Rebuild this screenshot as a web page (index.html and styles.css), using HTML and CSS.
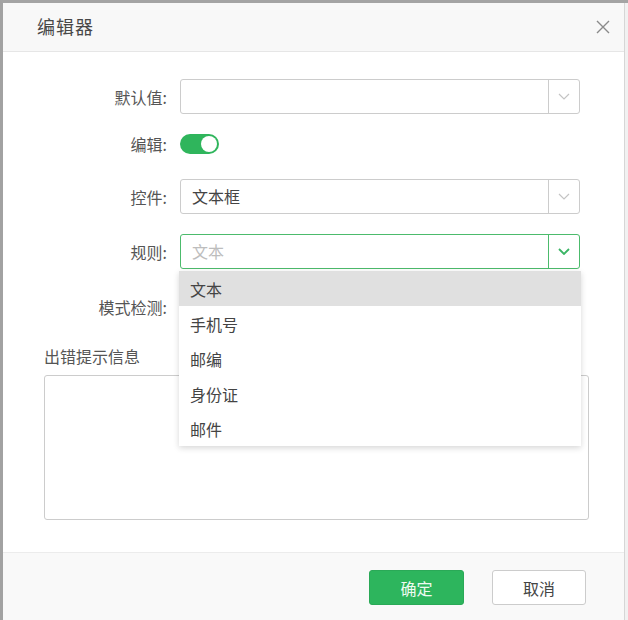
FILE: index.html
```html
<!DOCTYPE html>
<html lang="zh-CN">
<head>
<meta charset="utf-8">
<title>编辑器</title>
<link rel="stylesheet" href="styles.css">
</head>
<body>
<div class="frame">
  <div class="dialog">
    <div class="header">
      <span class="title">编辑器</span>
      <svg class="close" width="14" height="14" viewBox="0 0 14 14"><path d="M1 1L13 13M13 1L1 13" stroke="#8a8a8a" stroke-width="1.4" fill="none"/></svg>
    </div>
    <div class="body">
      <div class="row row-default">
        <label class="label">默认值:</label>
        <div class="select">
          <span class="value"></span>
          <span class="arrow"><svg width="12" height="7" viewBox="0 0 12 7"><path d="M1 1L6 6L11 1" stroke="#c4c4c4" stroke-width="1.2" fill="none"/></svg></span>
        </div>
      </div>
      <div class="row row-edit">
        <label class="label">编辑:</label>
        <span class="toggle"><span class="knob"></span></span>
      </div>
      <div class="row row-control">
        <label class="label">控件:</label>
        <div class="select">
          <span class="value">文本框</span>
          <span class="arrow"><svg width="12" height="7" viewBox="0 0 12 7"><path d="M1 1L6 6L11 1" stroke="#c4c4c4" stroke-width="1.2" fill="none"/></svg></span>
        </div>
      </div>
      <div class="row row-rule">
        <label class="label">规则:</label>
        <div class="select open">
          <span class="value placeholder">文本</span>
          <span class="arrow"><svg width="12" height="7" viewBox="0 0 12 7"><path d="M1 1L6 6L11 1" stroke="#3bb565" stroke-width="1.8" fill="none"/></svg></span>
          <ul class="menu">
            <li class="item active">文本</li>
            <li class="item">手机号</li>
            <li class="item">邮编</li>
            <li class="item">身份证</li>
            <li class="item">邮件</li>
          </ul>
        </div>
      </div>
      <div class="row row-mode">
        <label class="label">模式检测:</label>
        <div class="select"><span class="value"></span></div>
      </div>
      <div class="err-label">出错提示信息</div>
      <div class="textarea"></div>
    </div>
    <div class="footer">
      <button class="btn btn-ok">确定</button>
      <button class="btn btn-cancel">取消</button>
    </div>
  </div>
</div>
</body>
</html>
```
FILE: styles.css
```css
* { box-sizing: border-box; }
html, body { margin: 0; padding: 0; }
body {
  width: 628px;
  height: 620px;
  overflow: hidden;
  background: #f1f1f1;
  font-family: "Noto Sans CJK SC", "Noto Sans", sans-serif;
  color: #555;
}
.frame {
  width: 628px;
  height: 620px;
  border-top: 3px solid #a4a4a4;
  border-left: 3px solid #a2a2a2;
}
.dialog {
  width: 622px;
  height: 617px;
  background: #fff;
  border-right: 1px solid #d6d6d6;
  display: flex;
  flex-direction: column;
}
.header {
  height: 49px;
  flex: none;
  background: #f8f8f8;
  border-bottom: 1px solid #e6e6e6;
  display: flex;
  align-items: center;
  justify-content: space-between;
  padding: 0 14px 2px 34px;
}
.title {
  font-size: 18px;
  line-height: 24px;
  color: #484848;
  letter-spacing: 1px;
}
.close { display: block; margin-top: 2px; }
.body {
  flex: 1;
  position: relative;
  padding-top: 27px;
}
.row {
  display: flex;
  align-items: center;
}
.label {
  width: 164px;
  text-align: right;
  font-size: 16px;
  line-height: 20px;
  color: #555;
  margin-right: 13px;
}
.row-edit { margin-top: 20px; height: 20px; }
.row-control { margin-top: 25px; }
.row-rule { margin-top: 20px; }
.row-mode { margin-top: 20px; }
.select {
  position: relative;
  width: 400px;
  height: 35px;
  border: 1px solid #cccccc;
  border-radius: 3px;
  display: flex;
  background: #fff;
}
.select .value {
  flex: 1;
  padding-left: 11px;
  font-size: 16px;
  line-height: 33px;
  color: #444;
}
.select .placeholder { color: #bdbdbd; }
.select .arrow {
  width: 31px;
  flex: none;
  border-left: 1px solid #cccccc;
  display: flex;
  align-items: center;
  justify-content: center;
}
.select.open { border-color: #4cbb6c; }
.select.open .arrow { border-left-color: #4cbb6c; }
.toggle {
  position: relative;
  width: 39px;
  height: 20px;
  border-radius: 10px;
  background: #2fb55c;
}
.knob {
  position: absolute;
  right: 2px;
  top: 2px;
  width: 16px;
  height: 16px;
  border-radius: 50%;
  background: #fff;
}
.menu {
  position: absolute;
  top: calc(100% + 3px);
  left: -2px;
  width: 402px;
  margin: 0;
  padding: 0;
  list-style: none;
  background: #fff;
  box-shadow: 0 2px 6px rgba(0, 0, 0, 0.16);
  z-index: 5;
}
.item {
  height: 35px;
  line-height: 36px;
  padding-left: 11px;
  font-size: 16px;
  color: #444;
}
.item.active { background: #e0e0e0; }
.err-label {
  margin: 22px 0 0 41px;
  font-size: 16px;
  line-height: 20px;
  color: #555;
}
.textarea {
  margin: 9px 35px 0 41px;
  height: 145px;
  border: 1px solid #cccccc;
  border-radius: 3px;
}
.footer {
  height: 68px;
  flex: none;
  background: #f9f9f9;
  border-top: 1px solid #ececec;
  display: flex;
  justify-content: flex-end;
  align-items: flex-start;
  gap: 28px;
  padding: 17px 38px 0 0;
}
.btn {
  height: 35px;
  font-family: "Noto Sans CJK SC", "Noto Sans", sans-serif;
  font-size: 16px;
  border-radius: 3px;
  padding: 0;
  cursor: pointer;
}
.btn-ok {
  width: 95px;
  background: #2db55d;
  border: 1px solid #2aa957;
  color: #eefaf1;
}
.btn-cancel {
  width: 94px;
  background: #fff;
  border: 1px solid #cccccc;
  color: #444;
}
```
